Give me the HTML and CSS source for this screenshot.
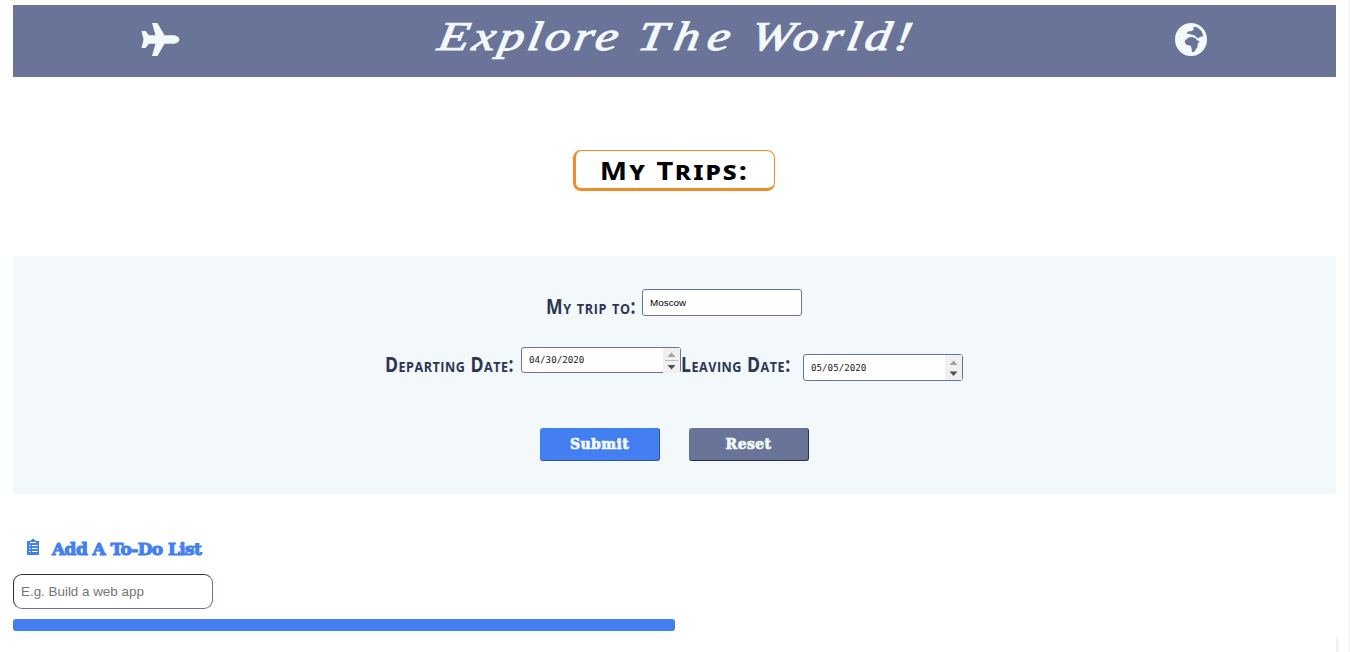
FILE: index.html
```html
<!DOCTYPE html>
<html lang="en">
<head>
<meta charset="utf-8">
<title>Explore The World!</title>
<link rel="stylesheet" href="styles.css">
</head>
<body>
<div class="page">
  <header class="banner">
    <svg class="plane" viewBox="0 0 38 33"><path d="M10.5 0H16L23 12.2H31C35 12.2 38 14.3 38 16.5S35 20.8 31 20.8H23L16 33H10.5L14 20.8H7.5L4 25H0L2 16.5 0 8H4L7.5 12.2H14Z"/></svg>
    <h1 class="title"><span class="w1">Explore</span> <span class="w2">The</span> <span class="w3">World!</span></h1>
    <svg class="globe" viewBox="0 0 32 33"><ellipse class="sea" cx="16" cy="16.5" rx="16" ry="16.5"/><path class="land" d="M18 4L22 4.2 26.5 8 28 12 27 14 25 13.6 24 15 21.5 14.6 20 12.6 16 11.5 11.5 10.5 13 8.5 17 8 19 6ZM14 14.2L17.5 14 19 15 21.5 15 22 17 24 18 25 17.5 22.7 21 22.5 24 20 27.5 19 29H17L16.5 25 15.5 22.5 12 22 10 20V17.5Z"/><path class="gulf" d="M20.5 14.8L22.5 17.2 25 17"/></svg>
  </header>
  <div class="heading-row"><h2 class="trips"><span>My Trips:</span></h2></div>
  <form class="trip-form">
    <div class="row destination">
      <label class="label to">My trip to:</label>
      <input class="field" type="text" value="Moscow">
    </div>
    <div class="row dates">
      <label class="label depart">Departing Date:</label>
      <div class="field date first"><span>04/30/2020</span><svg class="spin" viewBox="0 0 17 25"><path class="up" d="M4.5 9L8.5 4.5 12.5 9Z"/><path class="rule" d="M2 12.5H15"/><path class="down" d="M4.5 17H12.5L8.5 21.5Z"/></svg></div>
      <label class="label leave">Leaving Date:</label>
      <div class="field date second"><span>05/05/2020</span><svg class="spin" viewBox="0 0 17 25"><path class="up" d="M4.5 10L8.5 5.5 12.5 10Z"/><path class="down" d="M4.5 16.5H12.5L8.5 21Z"/></svg></div>
    </div>
    <div class="row actions">
      <button class="btn submit" type="button">Submit</button>
      <button class="btn reset" type="button">Reset</button>
    </div>
  </form>
  <section class="todo">
    <div class="todo-head">
      <svg class="clipboard" viewBox="0 0 12 16"><path class="board" d="M0 2H3.5V1H5V0H7V1H8.5V2H12V16H0Z"/><path class="lines" d="M2 6.5H3.5M5 6.5H10.5M2 9.5H3.5M5 9.5H10.5M2 12.5H3.5M5 12.5H10.5M3 3.5H9"/></svg>
      <h3 class="todo-title">Add A To-Do List</h3>
    </div>
    <input class="todo-input" type="text" placeholder="E.g. Build a web app">
    <div class="bar"></div>
  </section>
</div>
<div class="edge"></div>
<div class="corner"></div>
</body>
</html>
```
FILE: styles.css
```css
* { box-sizing: border-box; }
body { margin: 0; height: 652px; overflow: hidden; background: #fff; position: relative; }
h1, h2, h3 { margin: 0; }
.page { margin: 0 14px 0 13px; padding-top: 5px; }
.banner { height: 72px; background: #6a7398; display: flex; align-items: flex-start; padding: 18px 129px 0 128px; }
.plane { width: 39px; height: 33px; fill: #f3f8fb; flex: none; }
.globe { width: 32px; height: 33px; flex: none; margin-left: auto; }
.sea { fill: #f3f8fb; }
.land { fill: #6a7398; }
.gulf { fill: none; stroke: #f3f8fb; stroke-width: 1; }
.title { display: flex; margin: -13px 0 0 256px; height: 60px; color: #f3f8fb; font: italic 400 41px/52px "Liberation Serif", serif; white-space: nowrap; -webkit-text-stroke: 1px #f3f8fb; }
.title span { transform: scaleX(1.25) skewX(-8deg); transform-origin: 0 70%; }
.w1 { width: 200px; letter-spacing: 2.6px; }
.w2 { width: 113px; letter-spacing: 6px; }
.w3 { width: 165px; letter-spacing: 3.2px; }
.heading-row { display: flex; justify-content: center; padding: 73px 1px 0 0; height: 179px; }
.trips { width: 202px; height: 41px; border: 1px solid #f28c28; border-width: 1px 1px 3px 3px; border-radius: 8px; text-align: center; color: #000; font: 700 25px/38px "Noto Sans", sans-serif; font-variant: small-caps; letter-spacing: 1.8px; white-space: nowrap; margin-right: 1px; }
.trips span { display: inline-block; transform: scaleX(1.16); }
.trip-form { height: 238px; background: #f3f8fb; padding-top: 33px; }
.row { display: flex; }
.label { color: #2b3753; font: 700 21px/28px "Open Sans", sans-serif; font-variant: small-caps; white-space: nowrap; flex: none; transform: scaleX(.84); transform-origin: 0 50%; letter-spacing: .6px; padding-top: 3px; }
.field { width: 160px; height: 27px; border: 1px solid #6a7398; border-radius: 3px; background: #fff; padding: 0 7px; color: #000; font: 9.9px "Liberation Sans", sans-serif; flex: none; }
.destination { height: 58px; padding-left: 533px; }
.to { width: 96px; letter-spacing: .7px; }
.dates { height: 81px; padding-left: 372px; }
.depart { width: 136px; }
.leave { width: 122px; }
.date { display: flex; align-items: center; justify-content: space-between; padding-right: 0; font: 9.2px "DejaVu Sans Mono", monospace; color: #222; }
.first { height: 26px; }
.first span { padding-bottom: 2px; }
.second { margin-top: 7px; }
.spin { width: 17px; height: 25px; background: #f0f0f0; }
.up { fill: #a3a3a3; }
.down { fill: #505050; }
.rule { stroke: #bbb; stroke-width: 1; }
.actions { padding-left: 527px; gap: 29px; }
.btn { width: 120px; height: 33px; padding: 0 0 1px; border: 0 solid; border-width: 0 1px 1px 0; border-radius: 3px; color: #f3f8fb; font: 900 14px "DejaVu Serif", serif; letter-spacing: .4px; -webkit-text-stroke: .7px #f3f8fb; }
.submit { background: #437ff0; border-color: #2c539e; }
.reset { background: #6a7398; border-color: #2b2f44; }
.todo { padding-top: 44px; }
.todo-head { display: flex; height: 36px; padding-left: 14px; }
.clipboard { width: 12px; height: 16px; margin-top: 1px; }
.board { fill: #437ff0; }
.lines { fill: none; stroke: #fff; stroke-width: 1; }
.todo-title { margin-left: 13px; color: #437ff0; font: 900 17px/22px "DejaVu Serif", serif; white-space: nowrap; letter-spacing: -.6px; -webkit-text-stroke: 1.1px #437ff0; }
.todo-input { display: block; width: 200px; height: 35px; border: 1px solid; border-color: #2b2f44 #6a7398 #6a7398 #2b2f44; border-radius: 9px; padding: 0 7px; font: 13.4px "Liberation Sans", sans-serif; }
.todo-input::placeholder { color: #757575; }
.bar { width: 662px; height: 12px; margin-top: 10px; border-radius: 3px; background: #437ff0; }
.edge { position: absolute; right: 0; top: 0; width: 1px; height: 652px; background: #f0f0f0; }
.corner { position: absolute; left: 1336px; top: 637px; width: 3px; height: 15px; background: #f3f3f3; border-top-right-radius: 3px; }
```
